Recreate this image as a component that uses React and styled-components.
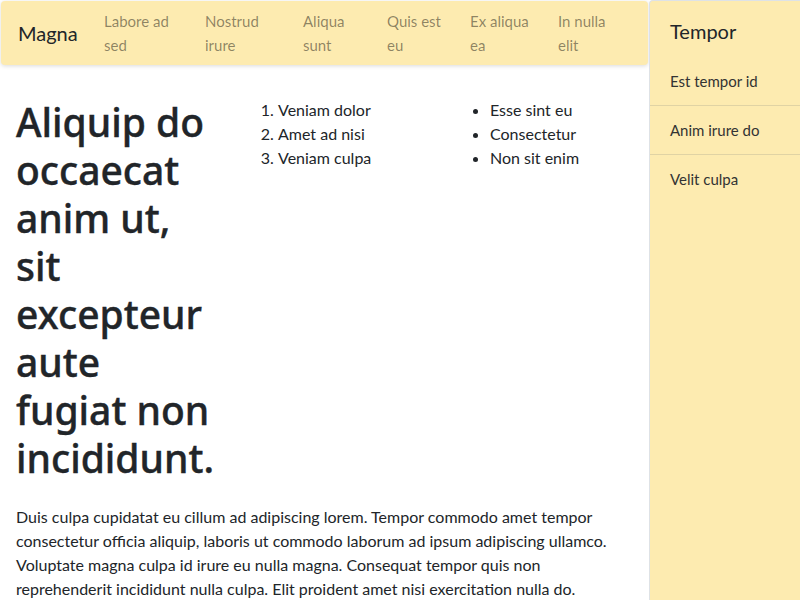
import styled, { createGlobalStyle } from "styled-components";

const GlobalStyle = createGlobalStyle`
    html, body {
        margin: 0;
        padding: 0;
        background: #FFFFFF;
    }
    body {
        font-family: 'Lato', 'Liberation Sans', sans-serif;
        font-size: 16px;
        line-height: 24px;
        color: #212529;
    }
`
const Page = styled.div`
    width: 800px;
    height: 600px;
    display: flex;
    overflow: hidden;
`
const MainColumn = styled.div`
    width: 648px;
    flex-shrink: 0;
    display: flex;
    flex-direction: column;
`
const NavBar = styled.nav`
    height: 64px;
    flex-shrink: 0;
    margin: 1px 0 0 1px;
    background: #FDEBB0;
    border-radius: 4px;
    box-shadow: 0 1px 4px rgba(0, 0, 0, 0.15);
    display: flex;
    align-items: center;
    padding-left: 17px;
`
const Brand = styled.div`
    font-size: 20px;
    line-height: 30px;
    color: #212529;
    width: 86px;
    flex-shrink: 0;
`
const NavLink = styled.a`
    width: ${props => props.w}px;
    flex-shrink: 0;
    font-size: 15px;
    line-height: 24px;
    color: rgba(0, 0, 0, 0.45);
    text-decoration: none;
    padding-right: 12px;
    box-sizing: border-box;
`
const Content = styled.div`
    padding: 33px 16px 0 16px;
`
const TopRow = styled.div`
    display: grid;
    grid-template-columns: 206px 196px 1fr;
    column-gap: 16px;
    align-items: start;
`
const Heading = styled.h1`
    margin: 0;
    max-width: 198px;
    font-family: 'Noto Sans', 'Lato', sans-serif;
    font-size: 39px;
    line-height: 48px;
    font-weight: 500;
    color: #212529;
    -webkit-text-stroke: 0.4px #212529;
`
const NumberList = styled.ol`
    margin: 0;
    padding-left: 40px;
`
const BulletList = styled.ul`
    margin: 0;
    padding-left: 40px;
`
const Paragraph = styled.p`
    margin: 23px 0 0 0;
    font-size: 16px;
    line-height: 24px;
`
const SideBar = styled.aside`
    flex: 1;
    margin-left: 1px;
    background: #FDEBB0;
    border-left: 1px solid #DEE2E6;
    border-top: 1px solid #DEE2E6;
    border-top-left-radius: 4px;
`
const SideTitle = styled.div`
    font-size: 20px;
    line-height: 24px;
    padding: 18px 20px 14px 20px;
    color: #212529;
`
const SideItem = styled.div`
    padding: 12px 20px;
    line-height: 24px;
    font-size: 15px;
    color: #333333;
    border-bottom: ${props => props.last ? "none" : "1px solid #E0D3A4"};
`

const links = [
    ["Labore ad sed", 101],
    ["Nostrud irure", 98],
    ["Aliqua sunt", 84],
    ["Quis est eu", 83],
    ["Ex aliqua ea", 88],
    ["In nulla elit", 80],
]

const App = () => {
    return (<>
        <GlobalStyle/>
        <Page>
            <MainColumn>
                <NavBar>
                    <Brand>Magna</Brand>
                    {links.map(([text, w]) => (
                        <NavLink key={text} w={w} href="#">{text}</NavLink>
                    ))}
                </NavBar>
                <Content>
                    <TopRow>
                        <Heading>Aliquip do occaecat anim ut, sit excepteur aute fugiat non incididunt.</Heading>
                        <NumberList>
                            <li>Veniam dolor</li>
                            <li>Amet ad nisi</li>
                            <li>Veniam culpa</li>
                        </NumberList>
                        <BulletList>
                            <li>Esse sint eu</li>
                            <li>Consectetur</li>
                            <li>Non sit enim</li>
                        </BulletList>
                    </TopRow>
                    <Paragraph>
                        Duis culpa cupidatat eu cillum ad adipiscing lorem. Tempor commodo amet tempor consectetur officia aliquip, laboris ut commodo laborum ad ipsum adipiscing ullamco. Voluptate magna culpa id irure eu nulla magna. Consequat tempor quis non reprehenderit incididunt nulla culpa. Elit proident amet nisi exercitation nulla do.
                    </Paragraph>
                </Content>
            </MainColumn>
            <SideBar>
                <SideTitle>Tempor</SideTitle>
                <SideItem>Est tempor id</SideItem>
                <SideItem>Anim irure do</SideItem>
                <SideItem last>Velit culpa</SideItem>
            </SideBar>
        </Page>
    </>)
}

export default App;
